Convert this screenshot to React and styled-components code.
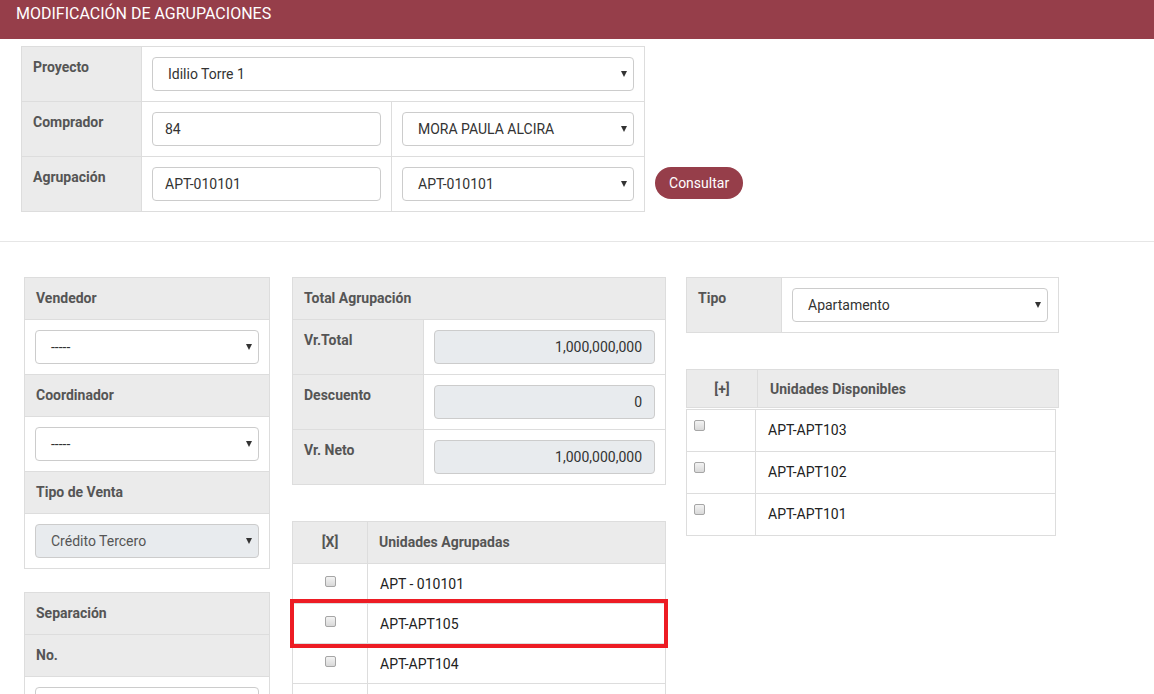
import React from "react";
import styled, { createGlobalStyle } from "styled-components";

const GlobalStyle = createGlobalStyle`
  * { box-sizing: border-box; }
  body {
    margin: 0;
    font-family: Roboto, "Liberation Sans", Arial, sans-serif;
    font-size: 14px;
    color: #333;
    background: #fff;
  }
`;

const TitleBar = styled.header`
  height: 39px;
  padding: 4px 16px 0;
  background: #963e4a;
  color: #fff;
  font-size: 16px;
  line-height: 20px;
`;

const TopSection = styled.section`
  display: flex;
  align-items: flex-end;
  gap: 10px;
  padding: 7px 0 0 21px;
`;

const Table = styled.table`
  border-collapse: collapse;
  table-layout: fixed;
  width: ${(p) => p.$width || "100%"};
  border: 1px solid #ddd;
`;

const Cell = styled.td`
  border: 1px solid #ddd;
  padding: 10px;
  vertical-align: top;
  line-height: 20px;
`;

const LabelCell = styled.th`
  border: 1px solid #ddd;
  padding: 10px 11px;
  vertical-align: top;
  text-align: left;
  background: #ebebeb;
  color: #555;
  font-weight: bold;
  line-height: 20px;
`;

const HeadCell = styled(LabelCell)`
  padding: ${(p) => (p.$tight ? "9px 12px 8px" : "10px 11px 11px")};
  text-align: ${(p) => (p.$center ? "center" : "left")};
`;

const CheckCell = styled(Cell)`
  text-align: ${(p) => (p.$left ? "left" : "center")};
  padding: ${(p) => (p.$left ? "10px 7px 11px" : "10px 10px 9px")};
`;

const ItemCell = styled(Cell)`
  padding: ${(p) => (p.$compact ? "10px 12px 9px" : "10px 12px 11px")};
  color: #222;
`;

const Field = styled.input`
  display: block;
  width: 100%;
  height: 34px;
  padding: 0 12px;
  border: 1px solid #ccc;
  border-radius: 4px;
  font: inherit;
  color: #333;
  background: ${(p) => (p.readOnly ? "#e8ebee" : "#fff")};
  text-align: ${(p) => (p.$right ? "right" : "left")};
  outline: none;
`;

const Select = styled.div`
  display: flex;
  align-items: center;
  justify-content: space-between;
  height: 34px;
  padding: 0 6px 0 15px;
  border: 1px solid #ccc;
  border-radius: 4px;
  background: ${(p) => (p.$disabled ? "#e8ebee" : "#fff")};
  color: ${(p) => (p.$disabled ? "#555" : "#333")};
`;

const Caret = styled.span`
  width: 0;
  height: 0;
  border-left: 3.5px solid transparent;
  border-right: 3.5px solid transparent;
  border-top: 6px solid #333;
`;

const Button = styled.button`
  height: 32px;
  margin-bottom: 13px;
  padding: 0 14px;
  border: none;
  border-radius: 16px;
  background: #963e4a;
  color: #fff;
  font: inherit;
`;

const Divider = styled.hr`
  margin: 29px 0 35px;
  border: 0;
  border-top: 1px solid #e6e6e6;
`;

const Lower = styled.section`
  display: flex;
  align-items: flex-start;
  padding-left: 24px;
`;

const Column = styled.div`
  display: flex;
  flex-direction: column;
  width: ${(p) => p.$width}px;
  margin-right: ${(p) => p.$gap || 0}px;
  gap: ${(p) => p.$spacing || 0}px;
`;

const Overlay = styled.div`
  position: relative;
`;

const Highlight = styled.div`
  position: absolute;
  top: 78px;
  left: -2px;
  width: 378px;
  height: 49px;
  border: 4px solid #ed1c24;
  pointer-events: none;
`;

const Check = styled.input.attrs({ type: "checkbox" })`
  appearance: none;
  width: 11px;
  height: 11px;
  margin: ${(p) => (p.$flush ? "0" : "2px 0 0")};
  vertical-align: top;
  border: 1px solid #a6a6a6;
  border-radius: 2px;
  background: linear-gradient(#f3f3f3, #d9d9d9);
`;

const Available = styled.div`
  display: flex;
  flex-direction: column;
  gap: 1px;
`;

const SelectBox = ({ value, disabled }) => (
  <Select $disabled={disabled}>
    <span>{value}</span>
    <Caret />
  </Select>
);

const agrupadas = ["APT - 010101", "APT-APT105", "APT-APT104", ""];
const disponibles = ["APT-APT103", "APT-APT102", "APT-APT101"];

export default function App() {
  return (
    <>
      <GlobalStyle />
      <TitleBar>MODIFICACIÓN DE AGRUPACIONES</TitleBar>

      <TopSection>
        <Table $width="623px">
          <colgroup>
            <col style={{ width: 120 }} />
            <col style={{ width: 250 }} />
            <col style={{ width: 253 }} />
          </colgroup>
          <tbody>
            <tr>
              <LabelCell>Proyecto</LabelCell>
              <Cell colSpan={2}>
                <SelectBox value="Idilio Torre 1" />
              </Cell>
            </tr>
            <tr>
              <LabelCell>Comprador</LabelCell>
              <Cell>
                <Field defaultValue="84" />
              </Cell>
              <Cell>
                <SelectBox value="MORA PAULA ALCIRA" />
              </Cell>
            </tr>
            <tr>
              <LabelCell>Agrupación</LabelCell>
              <Cell>
                <Field defaultValue="APT-010101" />
              </Cell>
              <Cell>
                <SelectBox value="APT-010101" />
              </Cell>
            </tr>
          </tbody>
        </Table>
        <Button>Consultar</Button>
      </TopSection>

      <Divider />

      <Lower>
        <Column $width={246} $gap={22} $spacing={23}>
          <Table>
            <tbody>
              <tr><HeadCell>Vendedor</HeadCell></tr>
              <tr><Cell><SelectBox value="-----" /></Cell></tr>
              <tr><HeadCell>Coordinador</HeadCell></tr>
              <tr><Cell><SelectBox value="-----" /></Cell></tr>
              <tr><HeadCell>Tipo de Venta</HeadCell></tr>
              <tr><Cell><SelectBox value="Crédito Tercero" disabled /></Cell></tr>
            </tbody>
          </Table>
          <Table>
            <tbody>
              <tr><HeadCell>Separación</HeadCell></tr>
              <tr><HeadCell>No.</HeadCell></tr>
              <tr><Cell><Field /></Cell></tr>
            </tbody>
          </Table>
        </Column>

        <Column $width={374} $gap={20} $spacing={36}>
          <Table>
            <colgroup>
              <col style={{ width: 131 }} />
              <col />
            </colgroup>
            <tbody>
              <tr><HeadCell colSpan={2}>Total Agrupación</HeadCell></tr>
              <tr>
                <LabelCell>Vr.Total</LabelCell>
                <Cell><Field readOnly $right defaultValue="1,000,000,000" /></Cell>
              </tr>
              <tr>
                <LabelCell>Descuento</LabelCell>
                <Cell><Field readOnly $right defaultValue="0" /></Cell>
              </tr>
              <tr>
                <LabelCell>Vr. Neto</LabelCell>
                <Cell><Field readOnly $right defaultValue="1,000,000,000" /></Cell>
              </tr>
            </tbody>
          </Table>

          <Overlay>
            <Table>
              <colgroup>
                <col style={{ width: 75 }} />
                <col />
              </colgroup>
              <thead>
                <tr>
                  <HeadCell $center>[X]</HeadCell>
                  <HeadCell>Unidades Agrupadas</HeadCell>
                </tr>
              </thead>
              <tbody>
                {agrupadas.map((u, i) => (
                  <tr key={i}>
                    <CheckCell><Check /></CheckCell>
                    <ItemCell $compact>{u}</ItemCell>
                  </tr>
                ))}
              </tbody>
            </Table>
            <Highlight />
          </Overlay>
        </Column>

        <Column $width={373} $spacing={36}>
          <Table>
            <colgroup>
              <col style={{ width: 95 }} />
              <col />
            </colgroup>
            <tbody>
              <tr>
                <LabelCell>Tipo</LabelCell>
                <Cell><SelectBox value="Apartamento" /></Cell>
              </tr>
            </tbody>
          </Table>

          <Available>
            <Table>
              <colgroup>
                <col style={{ width: 71 }} />
                <col />
              </colgroup>
              <thead>
                <tr>
                  <HeadCell $center $tight>[+]</HeadCell>
                  <HeadCell $tight>Unidades Disponibles</HeadCell>
                </tr>
              </thead>
            </Table>
            <Table $width="370px">
              <colgroup>
                <col style={{ width: 69 }} />
                <col />
              </colgroup>
              <tbody>
                {disponibles.map((u) => (
                  <tr key={u}>
                    <CheckCell $left><Check $flush /></CheckCell>
                    <ItemCell>{u}</ItemCell>
                  </tr>
                ))}
              </tbody>
            </Table>
          </Available>
        </Column>
      </Lower>
    </>
  );
}
